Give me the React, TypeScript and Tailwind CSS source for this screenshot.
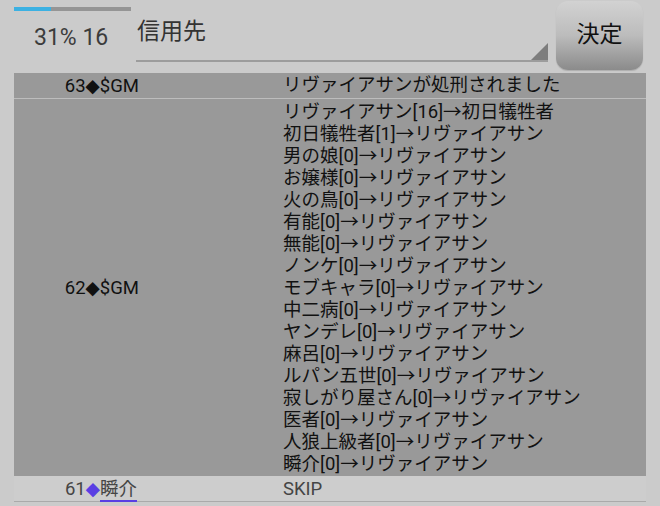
import React from 'react';

const FONT = 'font-["Roboto","Noto_Sans_CJK_JP",sans-serif]';

const votes = [
  'リヴァイアサン[16]→初日犠牲者',
  '初日犠牲者[1]→リヴァイアサン',
  '男の娘[0]→リヴァイアサン',
  'お嬢様[0]→リヴァイアサン',
  '火の鳥[0]→リヴァイアサン',
  '有能[0]→リヴァイアサン',
  '無能[0]→リヴァイアサン',
  'ノンケ[0]→リヴァイアサン',
  'モブキャラ[0]→リヴァイアサン',
  '中二病[0]→リヴァイアサン',
  'ヤンデレ[0]→リヴァイアサン',
  '麻呂[0]→リヴァイアサン',
  'ルパン五世[0]→リヴァイアサン',
  '寂しがり屋さん[0]→リヴァイアサン',
  '医者[0]→リヴァイアサン',
  '人狼上級者[0]→リヴァイアサン',
  '瞬介[0]→リヴァイアサン',
];

function Diamond({ className = '' }: { className?: string }) {
  return <span className={`font-["DejaVu_Sans",sans-serif] ${className}`}>◆</span>;
}

function Header() {
  return (
    <div className="flex h-[73px]">
      <div className="w-[136px] shrink-0">
        <div className="ml-[14px] mt-[7px] h-[4px] w-[117px] bg-[#959595]">
          <div className="h-full w-[37px] bg-[#3cb1e2]" />
        </div>
        <div className="pl-[34px] pt-[14px] text-[23px] leading-[26px] text-[#3c3c3c]">31% 16</div>
      </div>
      <div className="relative h-[62px] w-[412px] shrink-0 border-b-2 border-[#9c9c9c]">
        <div className="pl-[1px] pt-[19px] text-[23px] leading-[26px] text-[#333]">信用先</div>
        <svg className="absolute bottom-0 right-0" width="17" height="17" viewBox="0 0 17 17">
          <polygon points="17,0 17,17 0,17" fill="#7d7d7d" />
        </svg>
      </div>
      <button className="ml-[8px] mt-[1px] flex h-[69px] w-[87px] items-center justify-center rounded-[12px] bg-gradient-to-b from-[#d2d2d2] via-[#bcbcbc] to-[#8b8b8b] text-[23px] text-[#111] shadow-[0_1px_1px_rgba(0,0,0,0.15)]">
        決定
      </button>
    </div>
  );
}

export default function App() {
  return (
    <div className={`h-[506px] w-[660px] overflow-hidden bg-[#cbcbcb] ${FONT}`}>
      <Header />
      <div className="mx-[14px] w-[632px] text-[18.5px]">
        <div className="flex h-[26px] items-center border-b border-[#bdbdbd] bg-[#999999] leading-[25px] text-[#111]">
          <div className="w-[125px] shrink-0 text-right">
            63<Diamond />$GM
          </div>
          <div className="pl-[144px]">リヴァイアサンが処刑されました</div>
        </div>
        <div className="flex items-center bg-[#999999] pb-[1px] pt-[2px] text-[#111]">
          <div className="w-[125px] shrink-0 text-right leading-[22px]">
            62<Diamond />$GM
          </div>
          <div className="pl-[144px] leading-[22px]">
            {votes.map((v) => (
              <div key={v}>{v}</div>
            ))}
          </div>
        </div>
        <div className="flex h-[26px] items-center border-b border-[#aaaaaa] bg-[#cdcdcd] leading-[24px] text-[#454545]">
          <div className="w-[123px] shrink-0 text-right">
            61<Diamond className="text-[#5a3fe3]" />
            <span className="border-b-2 border-[#5a3fe3]">瞬介</span>
          </div>
          <div className="pl-[146px]">SKIP</div>
        </div>
      </div>
    </div>
  );
}
